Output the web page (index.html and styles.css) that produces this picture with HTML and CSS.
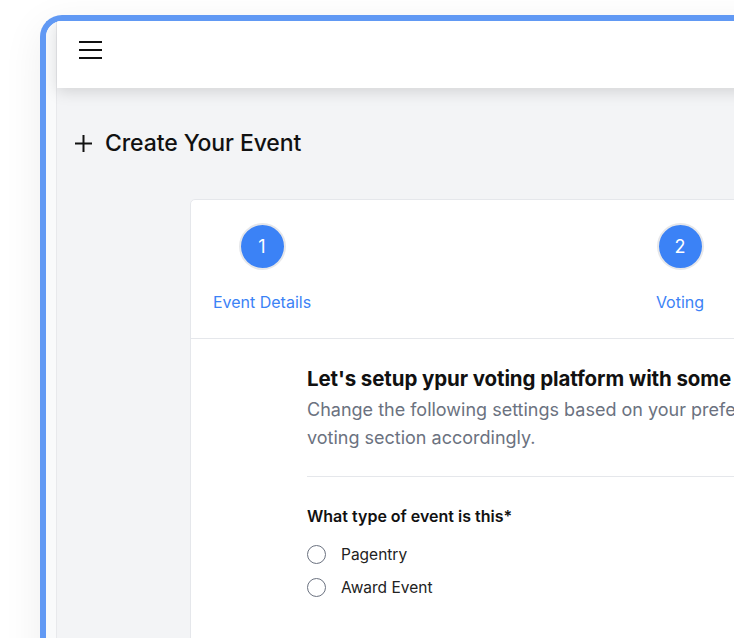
FILE: index.html
```html
<!DOCTYPE html>
<html lang="en">
<head>
<meta charset="utf-8">
<title>Create Your Event</title>
<link rel="stylesheet" href="styles.css">
</head>
<body>
<div class="frame">
  <div class="rail"></div>
  <div class="main">
    <header class="topbar">
      <button class="menu" aria-label="Menu">
        <svg width="23" height="18" viewBox="0 0 23 18"><path d="M0 1h23M0 9h23M0 17h23" stroke="#111" stroke-width="2" fill="none"/></svg>
      </button>
    </header>
    <div class="content">
      <h1 class="page-title">
        <svg class="plus" width="17" height="17" viewBox="0 0 17 17"><path d="M8.5 0v17M0 8.5h17" stroke="#111" stroke-width="2" fill="none"/></svg>
        <span>Create Your Event</span>
      </h1>
      <section class="card">
        <div class="steps">
          <div class="step">
            <span class="step-num">1</span>
            <span class="step-label">Event Details</span>
          </div>
          <div class="step">
            <span class="step-num">2</span>
            <span class="step-label">Voting</span>
          </div>
        </div>
        <div class="form">
          <h2 class="form-title">Let's setup ypur voting platform with some</h2>
          <p class="form-desc">Change the following settings based on your preferences and we will setup your<br>voting section accordingly.</p>
          <div class="field">
            <div class="field-label">What type of event is this*</div>
            <label class="radio"><span class="radio-dot"></span><span>Pagentry</span></label>
            <label class="radio"><span class="radio-dot"></span><span>Award Event</span></label>
          </div>
        </div>
      </section>
    </div>
  </div>
</div>
</body>
</html>
```

FILE: styles.css
```css
* { box-sizing: border-box; }
html, body {
  margin: 0;
  padding: 0;
  width: 734px;
  height: 638px;
  overflow: hidden;
  background: #ffffff;
  font-family: "Inter", "Noto Sans", sans-serif;
  color: #111111;
}
.frame {
  margin: 15px 0 0 40px;
  width: 820px;
  height: 720px;
  border-top: 6px solid #6199f4;
  border-left: 6px solid #6199f4;
  border-top-left-radius: 22px;
  box-shadow: 0 10px 40px rgba(0, 0, 0, 0.07);
  display: flex;
  overflow: hidden;
  background: #f9fafb;
}
.rail {
  width: 11px;
  flex: none;
  background: #f9fafb;
  border-right: 1px solid #e8e9ec;
}
.main {
  flex: 1;
  background: #f3f4f6;
  display: flex;
  flex-direction: column;
}
.topbar {
  height: 67px;
  flex: none;
  background: #ffffff;
  box-shadow: 0 4px 14px rgba(0, 0, 0, 0.13);
  padding: 20px 0 0 22px;
  position: relative;
  z-index: 1;
}
.menu {
  border: 0;
  padding: 0;
  margin: 0;
  background: none;
  display: block;
  line-height: 0;
}
.content {
  padding: 40px 0 0 18px;
}
.page-title {
  margin: 0;
  height: 30px;
  display: flex;
  align-items: center;
  gap: 13px;
  font-size: 23px;
  font-weight: 500;
  letter-spacing: -0.1px;
  color: #111111;
}
.plus { flex: none; }
.card {
  margin: 41px 0 0 115px;
  background: #ffffff;
  border: 1px solid #e5e7eb;
  border-radius: 5px;
}
.steps {
  display: flex;
  gap: 276px;
  padding: 23px 0 24px;
  border-bottom: 1px solid #e5e7eb;
}
.step {
  width: 142px;
  display: flex;
  flex-direction: column;
  align-items: center;
  gap: 20px;
}
.step-num {
  width: 47px;
  height: 47px;
  border-radius: 50%;
  border: 2px solid #e6e7ea;
  background: #3b82f6;
  color: #ffffff;
  font-size: 18px;
  display: flex;
  align-items: center;
  justify-content: center;
}
.step-label {
  font-size: 16px;
  line-height: 24px;
  color: #3b82f6;
}
.form {
  padding: 26px 0 120px 116px;
}
.form-title {
  margin: 0;
  font-size: 20.5px;
  line-height: 28px;
  font-weight: 700;
  letter-spacing: -0.1px;
  white-space: nowrap;
  color: #111111;
}
.form-desc {
  margin: 3px 0 0;
  font-size: 18px;
  line-height: 28px;
  color: #6b7280;
  white-space: nowrap;
  padding-bottom: 24px;
  border-bottom: 1px solid #e5e7eb;
}
.field {
  padding-top: 28px;
  display: flex;
  flex-direction: column;
  gap: 11px;
}
.field-label {
  font-size: 16px;
  line-height: 22px;
  font-weight: 600;
  margin-bottom: 5px;
}
.radio {
  display: flex;
  align-items: center;
  gap: 15px;
  height: 22px;
  font-size: 15.5px;
  color: #222222;
}
.radio-dot {
  width: 19px;
  height: 19px;
  border-radius: 50%;
  border: 1.5px solid #6b7280;
  flex: none;
}
```
